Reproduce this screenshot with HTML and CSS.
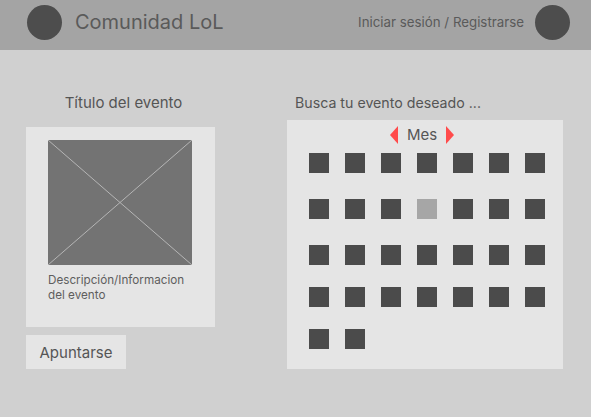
FILE: index.html
```html
<!DOCTYPE html>
<html lang="es">
  <head>
    <meta charset="utf-8">
    <title>Comunidad LoL</title>
    <link rel="stylesheet" href="styles.css">
  </head>

  <body>
    <header class="topbar">
      <div class="brand">
        <span class="avatar"></span>
        <span class="brandName">Comunidad LoL</span>
      </div>
      <div class="account">
        <a href="#" class="login">Iniciar sesión / Registrarse</a>
        <span class="avatar"></span>
      </div>
    </header>

    <main class="content">
      <section class="eventCol">
        <h2 class="eventTitle">Título del evento</h2>
        <div class="eventCard">
          <svg class="eventImage" width="144" height="125" viewBox="0 0 144 125">
            <rect x="0" y="0" width="144" height="125" fill="#737373" />
            <line x1="0" y1="0" x2="144" y2="125" stroke="#b5b5b5" stroke-width="1" />
            <line x1="144" y1="0" x2="0" y2="125" stroke="#b5b5b5" stroke-width="1" />
          </svg>
          <p class="eventDesc">Descripción/Informacion del evento</p>
        </div>
        <button class="joinBtn">Apuntarse</button>
      </section>

      <section class="calendarCol">
        <h2 class="searchTitle">Busca tu evento deseado ...</h2>
        <div class="calendar">
          <div class="monthNav">
            <span class="arrow arrowLeft"></span>
            <span class="monthName">Mes</span>
            <span class="arrow arrowRight"></span>
          </div>
          <div class="days"></div>
        </div>
      </section>
    </main>

    <script>
      const days = document.querySelector('.days');

      // 30 dias, el 11 marcado
      for (let i = 1; i <= 30; i++) {
        const day = document.createElement('span');
        day.className = 'day';
        if (i === 11) {
          day.classList.add('selected');
        }
        days.appendChild(day);
      }
    </script>
  </body>
</html>
```

FILE: styles.css
```css
html {
  font-family: 'Inter', 'Liberation Sans', sans-serif;
  color: #555;
}

body {
  margin: 0;
  min-height: 417px;
  background-color: #d0d0d0;
}

.topbar {
  display: flex;
  justify-content: space-between;
  align-items: center;
  height: 44px;
  padding: 0 21px 6px 27px;
  background-color: #a4a4a4;
}

.brand,
.account {
  display: flex;
  align-items: center;
}

.avatar {
  display: block;
  width: 35px;
  height: 35px;
  border-radius: 50%;
  background-color: #4d4d4d;
}

.brandName {
  margin-left: 13px;
  font-size: 20px;
  color: #5a5a5a;
}

.login {
  margin-right: 11px;
  font-size: 13.3px;
  color: #5a5a5a;
  text-decoration: none;
}

.content {
  display: flex;
  align-items: flex-start;
  gap: 72px;
  padding: 44px 26px 0;
}

.eventCol {
  width: 189px;
}

.eventTitle {
  margin: 0 0 16px;
  padding-left: 6px;
  font-size: 15px;
  font-weight: normal;
  line-height: 17px;
  text-align: center;
}

.eventCard {
  height: 200px;
  box-sizing: border-box;
  padding: 13px 22px 0;
  background-color: #e5e5e5;
}

.eventImage {
  display: block;
}

.eventDesc {
  margin: 8px 0 0;
  font-size: 11.7px;
  line-height: 15px;
  color: #5e5e5e;
}

.joinBtn {
  display: block;
  width: 100px;
  height: 34px;
  margin-top: 8px;
  padding: 0;
  border: none;
  background-color: #e5e5e5;
  font-family: inherit;
  font-size: 15px;
  color: #555;
  cursor: pointer;
}

.calendarCol {
  width: 276px;
}

.searchTitle {
  margin: 0 0 9px 8px;
  font-size: 14.2px;
  font-weight: normal;
  line-height: 17px;
}

.calendar {
  height: 249px;
  box-sizing: border-box;
  padding: 6px 0 0 22px;
  background-color: #e5e5e5;
}

.monthNav {
  display: flex;
  justify-content: center;
  align-items: center;
  gap: 9px;
  height: 18px;
  padding-right: 28px;
}

.monthName {
  font-size: 15px;
  line-height: 18px;
}

.arrow {
  width: 0;
  height: 0;
  border-top: 9px solid transparent;
  border-bottom: 9px solid transparent;
}

.arrowLeft {
  border-right: 8px solid #ff4b4b;
}

.arrowRight {
  border-left: 8px solid #ff4b4b;
}

.days {
  display: grid;
  grid-template-columns: repeat(7, 20px);
  grid-template-rows: 46px 46px 42px 42px 20px;
  column-gap: 16px;
  margin-top: 9px;
}

.day {
  width: 20px;
  height: 20px;
  background-color: #4b4b4b;
}

.day.selected {
  background-color: #a6a6a6;
}
```
